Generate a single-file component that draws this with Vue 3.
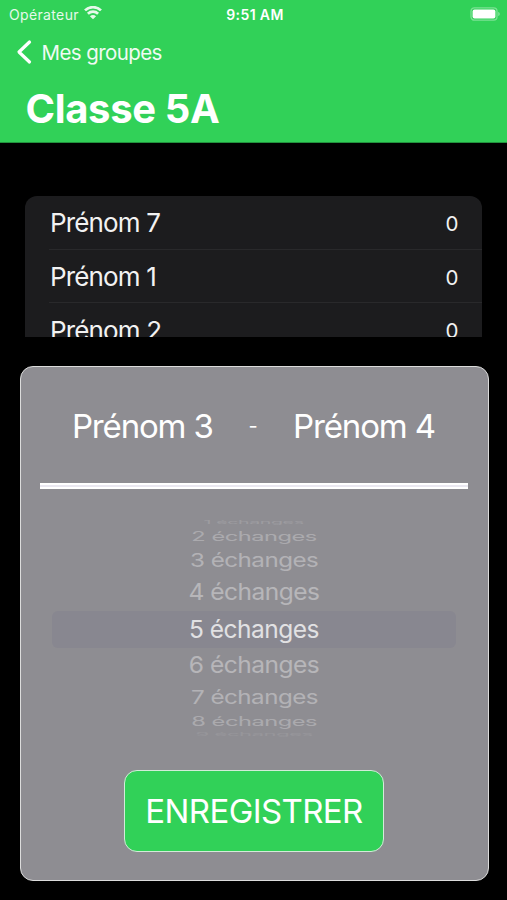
<script setup>
const students = [
  { name: 'Prénom 7', score: 0 },
  { name: 'Prénom 1', score: 0 },
  { name: 'Prénom 2', score: 0 },
]

// Wheel rows: height on screen, vertical squash and opacity of the cylinder
const options = [
  { n: 1, height: 9, squash: 0.2, width: 0.8, opacity: 0.13 },
  { n: 2, height: 20, squash: 0.52, width: 0.965, opacity: 0.26 },
  { n: 3, height: 28, squash: 0.77, width: 0.985, opacity: 0.33 },
  { n: 4, height: 36, squash: 0.94, width: 1, opacity: 0.36 },
  { n: 5, height: 37, squash: 1, width: 1, opacity: 0.75 },
  { n: 6, height: 36, squash: 0.94, width: 1, opacity: 0.36 },
  { n: 7, height: 28, squash: 0.77, width: 0.985, opacity: 0.33 },
  { n: 8, height: 19, squash: 0.52, width: 0.965, opacity: 0.26 },
  { n: 9, height: 8, squash: 0.2, width: 0.9, opacity: 0.08 },
]
</script>

<template>
  <main class="screen">
    <header class="header">
      <div class="status">
        <div class="carrier">
          <span>Opérateur</span>
          <svg class="wifi" viewBox="0 0 18 14" width="18" height="14">
            <path d="M1 4.400a11.500 11.500 0 0 1 16 0" />
            <path d="M3.900 7.700a7.300 7.300 0 0 1 10.200 0" />
            <path class="dot" d="M9 13.200 5.900 10.300a4.600 4.600 0 0 1 6.200 0z" />
          </svg>
        </div>
        <span class="time">9:51 AM</span>
        <svg class="battery" viewBox="0 0 31 14" width="31" height="14">
          <rect class="shell" x="1" y="0.8" width="26" height="12.4" rx="3.4" />
          <rect class="charge" x="2.600" y="2.600" width="22.800" height="8.800" rx="2" />
          <path class="cap" d="M28.400 5c1.600.4 1.600 3.600 0 4z" />
        </svg>
      </div>
      <nav class="back">
        <svg viewBox="0 0 16 26" width="16" height="26"><path d="M13.500 3 3 13l10.500 10" /></svg>
        <span>Mes groupes</span>
      </nav>
      <h1 class="title">Classe 5A</h1>
    </header>

    <ul class="list">
      <li v-for="s in students" :key="s.name" class="row">
        <div class="row-body">
          <span class="name">{{ s.name }}</span>
          <span class="score">{{ s.score }}</span>
        </div>
      </li>
    </ul>

    <section class="panel">
      <div class="pair">
        <span class="pupil">Prénom 3</span>
        <span class="dash">-</span>
        <span class="pupil">Prénom 4</span>
      </div>
      <div class="rule"></div>
      <div class="wheel">
        <div
          v-for="o in options"
          :key="o.n"
          class="option"
          :class="{ selected: o.n === 5 }"
          :style="{ height: o.height + 'px' }"
        >
          <span :style="{ transform: `scale(${o.width}, ${o.squash})`, opacity: o.opacity }">{{ o.n }} échanges</span>
        </div>
      </div>
      <button class="save">ENREGISTRER</button>
    </section>
  </main>
</template>

<style>
body {
  margin: 0;
  background: #000;
}
</style>

<style scoped>
.screen {
  width: 507px;
  height: 900px;
  overflow: hidden;
  background: #000;
  color: #fff;
  font-family: Inter, "Liberation Sans", sans-serif;
}
.header {
  box-sizing: border-box;
  height: 143px;
  background: #31d158;
  border-bottom: 1px solid #22933e;
}
.status {
  display: grid;
  grid-template-columns: 1fr auto 1fr;
  align-items: center;
  height: 28px;
  padding: 0 6px 0 9px;
  font-size: 14px;
}
.carrier {
  display: flex;
  align-items: center;
  gap: 5.500px;
  letter-spacing: 0.35px;
  opacity: 0.88;
}
.wifi {
  margin-top: -2px;
  fill: none;
  stroke: #fff;
  stroke-width: 2.7;
}
.wifi .dot {
  fill: #fff;
  stroke: none;
}
.time {
  font-weight: 600;
  letter-spacing: 0.4px;
}
.battery {
  justify-self: end;
  margin-top: -1px;
}
.shell {
  fill: none;
  stroke: #fff;
  stroke-width: 1.3;
  opacity: 0.36;
}
.charge {
  fill: #fff;
}
.cap {
  fill: #fff;
  opacity: 0.5;
}
.back {
  display: flex;
  align-items: center;
  gap: 10px;
  height: 48px;
  padding-left: 15.500px;
  font-size: 20.500px;
  letter-spacing: -0.58px;
}
.back svg {
  fill: none;
  stroke: #fff;
  stroke-width: 3.2;
  stroke-linecap: round;
  stroke-linejoin: round;
}
.back span {
  opacity: 0.93;
}
.title {
  margin: 0;
  padding-left: 25.500px;
  font-size: 40px;
  line-height: 66px;
  font-weight: 700;
  letter-spacing: -0.35px;
}
.list {
  height: 141px;
  margin: 53px 25px 0;
  padding: 0;
  overflow: hidden;
  list-style: none;
  background: #1c1c1e;
  border-radius: 12px 12px 0 0;
}
.row {
  padding-left: 24px;
}
.row-body {
  box-sizing: border-box;
  display: flex;
  align-items: center;
  justify-content: space-between;
  height: 53.700px;
  padding: 1px 24px 0 1px;
  border-bottom: 1px solid #29292b;
  color: #f2f2f2;
}
.name {
  font-size: 26px;
  letter-spacing: -0.85px;
}
.score {
  margin-right: -0.500px;
  padding-top: 1px;
  font-size: 20.500px;
}
.panel {
  box-sizing: border-box;
  display: flex;
  flex-direction: column;
  align-items: center;
  width: 469px;
  height: 515px;
  margin: 29px 0 0 19.500px;
  border: 1.500px solid #dcdcdc;
  border-radius: 13px;
  background: #8e8d92;
}
.pair {
  box-sizing: border-box;
  display: grid;
  grid-template-columns: 141px auto 141px;
  justify-content: center;
  column-gap: 35.500px;
  align-items: center;
  height: 116px;
  padding: 1px 2px 0 0;
}
.pupil {
  font-size: 33px;
  letter-spacing: -1.150px;
  white-space: nowrap;
}
.dash {
  font-size: 20px;
}
.rule {
  width: 428px;
  height: 6px;
  background: linear-gradient(#fff 0 2px, #e9e7f0 2px 4px, #fff 4px);
}
.wheel {
  display: flex;
  flex-direction: column;
  align-items: center;
  width: 404px;
  margin-top: 28.500px;
}
.option {
  display: flex;
  align-items: center;
  justify-content: center;
  width: 100%;
  font-size: 24.500px;
  letter-spacing: -0.5px;
  white-space: nowrap;
}
.option span {
  margin-top: -1px;
}
.selected {
  border-radius: 6px;
  background: #888790;
}
.save {
  box-sizing: border-box;
  width: 260px;
  height: 82px;
  margin: 31px 0 0;
  padding: 0;
  border: 1.500px solid #d2ecd9;
  border-radius: 13px;
  background: #31d158;
  color: #fff;
  font: 400 33px Inter, "Liberation Sans", sans-serif;
  letter-spacing: -0.6px;
}
</style>
